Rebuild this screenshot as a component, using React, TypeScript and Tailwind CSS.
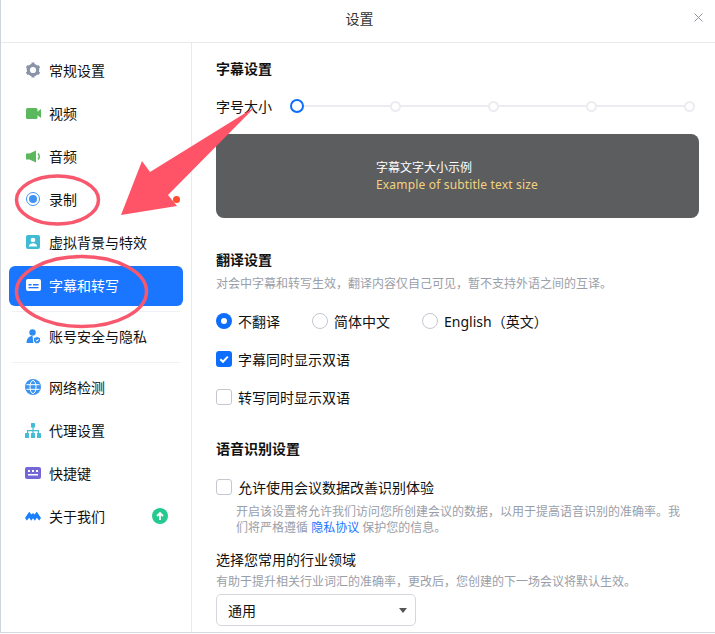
import type { ReactNode } from "react";

function Nav({ icon, label, active, extra, className = "" }: { icon: ReactNode; label: string; active?: boolean; extra?: ReactNode; className?: string }) {
  return (
    <div className={`flex h-[40px] items-center rounded-md pb-[2px] pl-[16px] text-[14px] ${active ? "bg-[#1a75ff] text-white" : "text-[#111]"} ${className}`}>
      <span className="mr-[8px] flex h-[16px] w-[16px] shrink-0 items-center justify-center">{icon}</span>
      <span className="shrink-0 whitespace-nowrap">{label}</span>
      {extra}
    </div>
  );
}

function Check({ on }: { on?: boolean }) {
  return on ? (
    <span className="flex h-[16px] w-[16px] items-center justify-center rounded-[3px] bg-[#0d6efd]">
      <svg width="12" height="12" viewBox="0 0 12 12"><path d="M2.3 6.2 5 8.8 9.8 3.6" fill="none" stroke="#fff" strokeWidth="2" /></svg>
    </span>
  ) : (
    <span className="h-[16px] w-[16px] rounded-[3px] border border-[#c4c7d0] bg-white" />
  );
}

function Radio({ on }: { on?: boolean }) {
  return on ? (
    <span className="flex h-[16px] w-[16px] items-center justify-center rounded-full bg-[#0d6efd]"><span className="h-[6px] w-[6px] rounded-full bg-white" /></span>
  ) : (
    <span className="h-[16px] w-[16px] rounded-full border border-[#c4c7d0] bg-white" />
  );
}

export default function App() {
  return (
    <div className="relative h-[634px] w-[715px] overflow-hidden bg-white text-[#111]" style={{ fontFamily: '"Noto Sans","Noto Sans CJK SC",sans-serif' }}>
      <div className="flex h-[633px] flex-col border-b border-l border-b-[#d5d9e0] border-l-[#ced3dc]">
        <header className="relative flex h-[43px] shrink-0 items-center justify-center border-b border-[#e8eaee] pb-[6px] pl-[3px] text-[14px] text-[#333]">
          设置
          <svg className="absolute right-[12px] top-[13px]" width="9" height="9" viewBox="0 0 9 9"><path d="M.5.5l8 8M8.500.5l-8 8" stroke="#8d929c" strokeWidth="1" /></svg>
        </header>
        <div className="flex min-h-0 flex-1">
          <aside className="flex w-[191px] shrink-0 flex-col border-r border-[#e8eaee] px-[8px] pt-[8px]">
            <div className="flex flex-col gap-[3px]">
              <Nav label="常规设置" icon={
                <svg width="16" height="16" viewBox="0 0 16 16"><circle cx="8" cy="8" r="4.700" fill="none" stroke="#8b93a8" strokeWidth="3.200" /><g stroke="#8b93a8" strokeWidth="3"><path d="M8 .6v3M8 12.400v3M1.600 4.300l2.600 1.500M11.800 10.200l2.600 1.500M1.600 11.700l2.600-1.500M11.800 5.800l2.600-1.500" /></g></svg>} />
              <Nav label="视频" icon={
                <svg width="15" height="11" viewBox="0 0 15 11"><rect width="11.500" height="11" rx="1.500" fill="#5cb85c" /><path d="M11 4 15 1v9l-4-3z" fill="#5cb85c" /></svg>} />
              <Nav label="音频" icon={
                <svg width="15" height="13" viewBox="0 0 15 13"><path d="M0 3.500h3.500L10 .5v12l-6.500-3H0z" fill="#5cb85c" /><path d="M12 3.500c1.700 1.700 1.700 4.300 0 6" fill="none" stroke="#5cb85c" strokeWidth="1.500" /></svg>} />
              <Nav label="录制" extra={<span className="ml-[96px] h-[7px] w-[7px] shrink-0 rounded-full bg-[#ff4d2e]" />} icon={
                <span className="flex h-[14px] w-[14px] items-center justify-center rounded-full border border-[#3f93f5]"><span className="h-[8px] w-[8px] rounded-full bg-[#3f93f5]" /></span>} />
              <Nav label="虚拟背景与特效" icon={
                <svg width="14" height="14" viewBox="0 0 14 14"><rect width="14" height="14" rx="2" fill="#3fbcd4" /><circle cx="7" cy="5" r="2.300" fill="#fff" /><path d="M2.800 11.500c.3-2.500 2.200-3.300 4.200-3.300s3.900.8 4.200 3.300z" fill="#fff" /></svg>} />
              <Nav active label="字幕和转写" icon={
                <svg width="15" height="12" viewBox="0 0 15 12"><rect width="15" height="12" rx="2" fill="#fff" /><rect x="2.500" y="5" width="3" height="1.500" fill="#1a75ff" /><rect x="7" y="5" width="5.500" height="1.500" fill="#1a75ff" /><rect x="2.500" y="8" width="10" height="1.300" fill="#1a75ff" /></svg>} />
            </div>
            <div className="mx-[3px] mt-[5px] border-t border-[#f0f1f4]" />
            <Nav className="mt-[5px]" label="账号安全与隐私" icon={
              <svg width="15" height="15" viewBox="0 0 15 15"><circle cx="6.500" cy="3.500" r="3.200" fill="#2f8cf0" /><path d="M0.500 14c0-4.500 2.500-7 6-7l1 7z" fill="#2f8cf0" /><path d="M11 7.500l3.500 1.200v2.800c0 1.600-1.500 2.800-3.500 3.500-2-.7-3.500-1.900-3.500-3.500V8.700z" fill="#2f8cf0" stroke="#fff" /><path d="M9.700 11 11 12.200 12.500 10" stroke="#fff" fill="none" /></svg>} />
            <div className="mx-[3px] mt-[5px] border-t border-[#f0f1f4]" />
            <div className="mt-[5px] flex flex-col gap-[3px]">
              <Nav label="网络检测" icon={
                <svg width="16" height="16" viewBox="0 0 16 16" fill="none"><circle cx="8" cy="8" r="8" fill="#3a94f2" /><g stroke="#fff" strokeWidth="1"><ellipse cx="8" cy="8" rx="3" ry="6.500" /><path d="M1.500 5.700h13M1.500 10.300h13" /></g></svg>} />
              <Nav label="代理设置" icon={
                <svg width="16" height="15" viewBox="0 0 16 15" fill="#45bbd6"><rect x="6" y="0" width="4" height="4.500" rx=".6" /><rect x="0" y="10" width="4" height="5" rx=".6" /><rect x="6" y="10" width="4" height="5" rx=".6" /><rect x="12" y="10" width="4" height="5" rx=".6" /><path d="M7.400 4h1.200v3h5.400v3.500h-1.200V8.200H8.600v2.300H7.400V8.200H3.200v2.300H2V7h5.400z" /></svg>} />
              <Nav label="快捷键" icon={
                <svg width="16" height="12" viewBox="0 0 16 12"><rect width="16" height="12" rx="2" fill="#7566d6" /><g fill="#fff"><rect x="3" y="3" width="2" height="2" /><rect x="7" y="3" width="2" height="2" /><rect x="11" y="3" width="2" height="2" /><rect x="3" y="7" width="10" height="1.500" /></g></svg>} />
              <Nav label="关于我们" extra={<span className="ml-[47px] flex h-[16px] w-[16px] shrink-0 items-center justify-center rounded-full bg-[#26c98f]"><svg width="10" height="10" viewBox="0 0 10 10"><path d="M5 9V2M2 5l3-3 3 3" fill="none" stroke="#fff" strokeWidth="1.800" /></svg></span>} icon={
                <svg width="16" height="10" viewBox="0 0 16 10" fill="#1a80ff"><path d="M0 7 4.200.8 6.500 3.600 8 2l1.500 1.600L11.800.8 16 7l-1.800 2.600-2.400-2.800-2 2.900L8 7.200 6.200 9.700l-2-2.900-2.400 2.800z" /></svg>} />
            </div>
          </aside>
          <main className="min-w-0 flex-1 overflow-hidden pl-[24px] pr-[16px] text-[14px]">
            <h2 className="mt-[16px] text-[14px] font-bold leading-[20px]">字幕设置</h2>
            <div className="mr-[4px] mt-[17px] flex h-[20px] items-center">
              <span className="w-[74px] shrink-0">字号大小</span>
              <div className="relative flex h-[14px] flex-1 items-center gap-[87px]">
                <div className="absolute left-[6px] right-[4px] top-[6px] h-[2px] bg-[#ebebf2]" />
                <span className="relative mr-[-1.5px] h-[14px] w-[14px] shrink-0 rounded-full border-[2px] border-[#0d6efd] bg-white" />
                <span className="relative h-[11px] w-[11px] shrink-0 rounded-full border-[2px] border-[#ebebf2] bg-white" />
                <span className="relative h-[11px] w-[11px] shrink-0 rounded-full border-[2px] border-[#ebebf2] bg-white" />
                <span className="relative h-[11px] w-[11px] shrink-0 rounded-full border-[2px] border-[#ebebf2] bg-white" />
                <span className="relative h-[11px] w-[11px] shrink-0 rounded-full border-[2px] border-[#ebebf2] bg-white" />
              </div>
            </div>
            <div className="mt-[18px] flex h-[84px] flex-col justify-center rounded-[8px] bg-[#5c5d5f] pl-[160px] text-[12px] leading-[17px]">
              <div className="text-white">字幕文字大小示例</div>
              <div className="tracking-[0.17px] text-[#f3d27f]">Example of subtitle text size</div>
            </div>
            <h2 className="mt-[32px] text-[14px] font-bold leading-[20px]">翻译设置</h2>
            <p className="mt-[6px] text-[12px] leading-[16px] text-[#9a9ea8]">对会中字幕和转写生效，翻译内容仅自己可见，暂不支持外语之间的互译。</p>
            <div className="mt-[19px] flex h-[20px] items-center">
              <span className="flex w-[96px] items-center gap-[6px]"><Radio on />不翻译</span>
              <span className="flex w-[110px] items-center gap-[6px]"><Radio />简体中文</span>
              <span className="flex items-center gap-[6px]"><Radio />English（英文）</span>
            </div>
            <div className="mt-[18px] flex h-[20px] items-center gap-[6px]"><Check on />字幕同时显示双语</div>
            <div className="mt-[18px] flex h-[20px] items-center gap-[6px]"><Check />转写同时显示双语</div>
            <h2 className="mt-[32px] text-[14px] font-bold leading-[20px]">语音识别设置</h2>
            <div className="mt-[18px] flex h-[20px] items-center gap-[6px]"><Check />允许使用会议数据改善识别体验</div>
            <p className="mt-[7px] pl-[20px] pr-[14px] text-[12px] leading-[16px] text-[#9a9ea8]">
              开启该设置将允许我们访问您所创建会议的数据，以用于提高语音识别的准确率。我们将严格遵循 <span className="text-[#1a75ff]">隐私协议</span> 保护您的信息。
            </p>
            <div className="mt-[14px] leading-[20px]">选择您常用的行业领域</div>
            <p className="mt-[4px] text-[12px] leading-[16px] text-[#9a9ea8]">有助于提升相关行业词汇的准确率，更改后，您创建的下一场会议将默认生效。</p>
            <div className="relative mt-[4px] flex h-[32px] w-[200px] items-center rounded-[5px] border border-[#d5d7dc] pl-[11px]">
              通用
              <span className="absolute right-[8px] top-[13px] h-0 w-0 border-x-[4px] border-t-[5px] border-x-transparent border-t-[#555]" />
            </div>
          </main>
        </div>
      </div>
      <svg className="pointer-events-none absolute left-0 top-0" width="715" height="634" viewBox="0 0 715 634">
        <path d="M255 107 L150 172 L142 161 L121 215 L177 206 L168 195 Z" fill="#ff5468" />
        <ellipse cx="57.500" cy="200" rx="41" ry="24" fill="none" stroke="#f7586d" strokeWidth="3.500" />
        <ellipse cx="81.500" cy="291.500" rx="65" ry="35" fill="none" stroke="#f7586d" strokeWidth="3.500" />
      </svg>
    </div>
  );
}
